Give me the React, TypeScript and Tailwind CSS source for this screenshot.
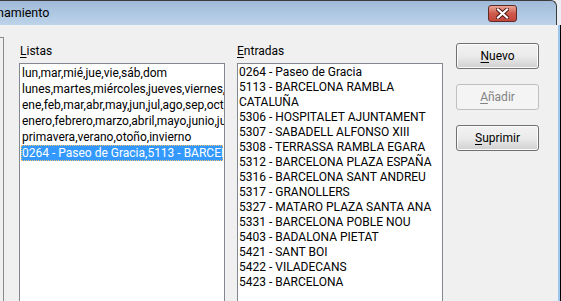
import React from 'react';

const listas = [
  'lun,mar,mié,jue,vie,sáb,dom',
  'lunes,martes,miércoles,jueves,viernes,sábado,domingo',
  'ene,feb,mar,abr,may,jun,jul,ago,sep,oct,nov,dic',
  'enero,febrero,marzo,abril,mayo,junio,julio,agosto,septiembre,octubre,noviembre,diciembre',
  'primavera,verano,otoño,invierno',
];

const entradas = [
  '0264 - Paseo de Gracia',
  '5113 - BARCELONA RAMBLA',
  'CATALUÑA',
  '5306 - HOSPITALET AJUNTAMENT',
  '5307 - SABADELL ALFONSO XIII',
  '5308 - TERRASSA RAMBLA EGARA',
  '5312 - BARCELONA PLAZA ESPAÑA',
  '5316 - BARCELONA SANT ANDREU',
  '5317 - GRANOLLERS',
  '5327 - MATARO PLAZA SANTA ANA',
  '5331 - BARCELONA POBLE NOU',
  '5403 - BADALONA PIETAT',
  '5421 - SANT BOI',
  '5422 - VILADECANS',
  '5423 - BARCELONA',
];

function Button({ first, rest, disabled }: { first: string; rest: string; disabled?: boolean }) {
  return (
    <div
      className={
        disabled
          ? 'h-[26px] w-[83px] rounded-[3px] border border-[#bfbfbf] bg-[#f4f4f4] flex items-center justify-center text-[#838383]'
          : 'h-[26px] w-[83px] rounded-[3px] border border-[#707070] bg-gradient-to-b from-[#f2f2f2] via-[#ebebeb] to-[#d0d0d0] flex items-center justify-center text-black shadow-[inset_0_0_0_1px_#fcfcfc]'
      }
    >
      <span>
        <span className="underline underline-offset-2">{first}</span>
        {rest}
      </span>
    </div>
  );
}

export default function App() {
  return (
    <div
      className="w-[561px] h-[301px] overflow-hidden flex flex-col bg-[#f0f0f0] text-[12px] leading-[16px]"
      style={{ fontFamily: 'Roboto, "Liberation Sans", sans-serif' }}
    >
      {/* title bar */}
      <div className="h-[25px] flex shrink-0">
        <div className="flex-1 flex items-center border-t border-r border-[#3c3c3c] rounded-tr-[6px] bg-gradient-to-b from-[#9fbad9] to-[#bdd3ea] pr-[39px]">
          <span className="ml-[-3px] text-black flex-1 text-[12.5px]">namiento</span>
          <div className="w-[29px] h-[17px] rounded-[3px] border border-[#5e2a26] bg-gradient-to-b from-[#e7a596] via-[#cf5a4c] to-[#c4463a] flex items-center justify-center mt-[1px]">
            <svg width="13" height="11" viewBox="0 0 13 11">
              <path d="M2 1.5 L11 9.5 M11 1.5 L2 9.5" stroke="#4a1510" strokeWidth="4" strokeLinecap="square" />
              <path d="M2 1.5 L11 9.5 M11 1.5 L2 9.5" stroke="#ffffff" strokeWidth="2.2" strokeLinecap="square" />
            </svg>
          </div>
        </div>
        <div className="w-[4px] bg-[#e9eef4]" />
      </div>

      {/* body */}
      <div className="flex-1 flex">
        <div className="w-[4px] mt-[12px] border-t border-r border-[#8a8a8a] shrink-0" />
        <div className="w-[15px] shrink-0" />

        <div className="w-[206px] flex flex-col pt-[18px] shrink-0">
          <div className="pl-[1px] mb-[4px] text-black">
            <span className="underline underline-offset-2">L</span>istas
          </div>
          <div className="h-[240px] border border-[#828790] bg-white px-[1px] pt-[1px] overflow-hidden">
            {listas.map((l) => (
              <div key={l} className="h-[16px] leading-[16px] whitespace-nowrap pl-[1px] text-black">
                {l}
              </div>
            ))}
            <div className="h-[16px] leading-[14px] whitespace-nowrap bg-[#3399ff] text-white border border-dotted border-[#f7c26b]">
              0264 - Paseo de Gracia,5113 - BARCELONA RAMBLA CATALUÑA,5306 - HOSPITALET AJUNTAMENT
            </div>
          </div>
        </div>

        <div className="w-[12px] shrink-0" />

        <div className="w-[206px] flex flex-col pt-[18px] shrink-0">
          <div className="mb-[4px] text-black">
            <span className="underline underline-offset-2">E</span>ntradas
          </div>
          <div className="h-[240px] border border-[#828790] bg-white pl-[1px] pt-[1px] overflow-hidden">
            {entradas.map((e) => (
              <div key={e} className="h-[15px] leading-[15px] whitespace-nowrap text-black">
                {e}
              </div>
            ))}
          </div>
        </div>

        <div className="w-[13px] shrink-0" />

        <div className="w-[83px] flex flex-col gap-[15px] pt-[18px] shrink-0">
          <Button first="N" rest="uevo" />
          <Button first="A" rest="ñadir" disabled />
          <Button first="S" rest="uprimir" />
        </div>

        <div className="flex-1" />
        <div className="w-[2px] bg-[#9dc8ee]" />
        <div className="w-[1px] bg-black" />
      </div>
    </div>
  );
}
